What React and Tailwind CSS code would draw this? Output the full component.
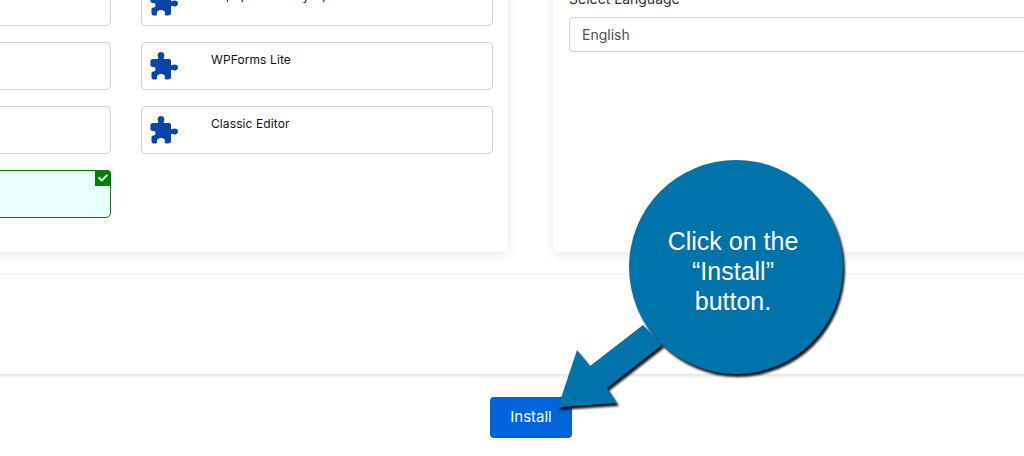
import { FaCheck } from 'react-icons/fa';

function PuzzleIcon() {
  return (
    <svg width="28" height="28" viewBox="0 0 28 28" className="ml-[8px] mt-[9px] shrink-0 text-[#0b44a9]" fill="currentColor">
      <path d="M3 7 H7.5 C8.5 7 8.5 6 8 5 C7 3 8 0 11 0 C14 0 15 3 14 5 C13.5 6 13.5 7 14.5 7 H19 C20.5 7 21 8 21 9 V12 C21 13.5 22 13.5 23 13 C25 12 28 12.5 28 15.5 C28 18.5 25 19 23 18 C22 17.5 21 17.5 21 19 V25 C21 26.5 20 27.5 18.5 27.5 H16 C14.5 27.5 14.5 26.5 15 25.5 C15.5 24 14 22 11 22 C8 22 6.5 24 7 25.5 C7.5 26.5 7 27.5 5.5 27.5 H3.5 C2 27.5 1.5 26.5 1.5 25 V21 C1.5 19.5 3 19.5 4 19.5 C6 19.5 6 15 4 15 C3 15 0.5 15 0.5 13 V9 C0.5 8 1.5 7 3 7 Z" />
    </svg>
  );
}

function PluginCard({ name, selected }) {
  return (
    <div className={`relative h-[48px] rounded-[5px] border flex ${selected ? 'border-[#008000] bg-[#e9fffd]' : 'border-[#cfcfcf] bg-white'}`}>
      {selected && (
        <span className="absolute -top-px -right-px w-[16px] h-[16px] bg-[#008000] rounded-tr-[4px] flex items-center justify-center text-white">
          <FaCheck size={10} />
        </span>
      )}
      {name && (
        <>
          <PuzzleIcon />
          <div className="ml-[33px] mt-[8px] text-[12px] leading-[18px] tracking-[0.1px] text-[#111]">{name}</div>
        </>
      )}
    </div>
  );
}

export default function App() {
  return (
    <div className="relative w-[1024px] h-[456px] overflow-hidden bg-white font-['Inter','Liberation_Sans',sans-serif]">
      <div className="w-[1574px] -ml-[256px] -mt-[29px]">
        {/* Top cards */}
        <div className="flex gap-[45px]">
          <div className="w-[764px] h-[281px] bg-white rounded-[5px] shadow-[0_2px_12px_rgba(0,0,0,0.1)] px-[15px] pt-[7px]">
            <div className="grid grid-cols-2 gap-x-[30px] gap-y-[16px]">
              <PluginCard />
              <PluginCard name="Popup Builder by OptinMonster" />
              <PluginCard />
              <PluginCard name="WPForms Lite" />
              <PluginCard />
              <PluginCard name="Classic Editor" />
              <PluginCard selected />
            </div>
          </div>
          <div className="flex-1 h-[281px] bg-white rounded-[5px] shadow-[0_2px_12px_rgba(0,0,0,0.1)] px-[16px] pt-[18px]">
            <div className="text-[14px] leading-[20px] text-[#333]">Select Language</div>
            <div className="mt-[8px] h-[35px] border border-[#cfcfcf] rounded-[4px] px-[12px] flex items-center text-[14px] text-[#495057]">English</div>
          </div>
        </div>

        {/* Empty panel */}
        <div className="mt-[23px] h-[99px] bg-white rounded-[5px] shadow-[0_1px_4px_rgba(0,0,0,0.18)]" />

        {/* Install */}
        <div className="mt-[23px] flex justify-center">
          <button className="w-[82px] h-[41px] bg-[#0065dd] rounded-[4px] text-white text-[15px]">Install</button>
        </div>
      </div>

      {/* Callout */}
      <svg width="320" height="270" viewBox="540 150 320 270" className="absolute left-[540px] top-[150px] drop-shadow-[2px_3px_1px_rgba(0,0,0,0.9)]">
        <path d="M643 325 L590 366 L577 350 L558 407 L617 403 L607 388 L662 345 Z" fill="#0073aa" />
        <circle cx="736" cy="267" r="107" fill="#0073aa" />
      </svg>
      <div className="absolute left-[653px] top-[226px] w-[160px] text-center text-white text-[25px] leading-[30px] font-['Liberation_Sans',sans-serif]">
        Click on the<br />“Install”<br />button.
      </div>
    </div>
  );
}
